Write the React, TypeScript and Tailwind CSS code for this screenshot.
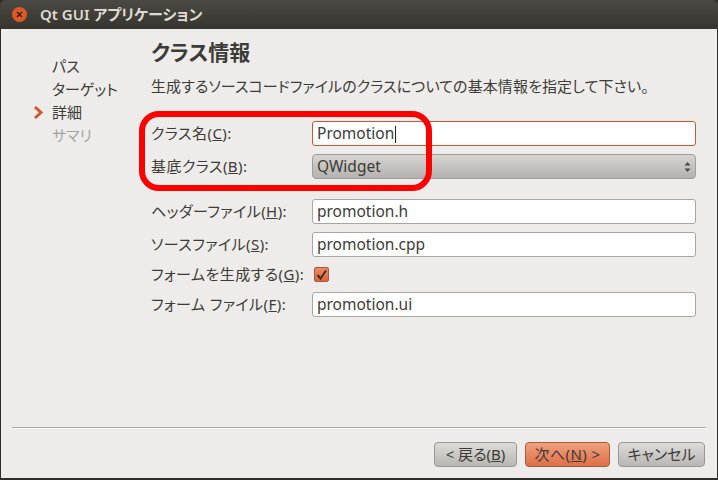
const font = { fontFamily: '"Noto Sans", "Noto Sans CJK JP", sans-serif', fontFeatureSettings: '"palt"' };

function Label({ text, mnemonic }: { text: string; mnemonic: string }) {
  return (
    <label className="w-[161px] shrink-0 text-[15px] leading-none tracking-[0.45px] text-[#3c3b37] whitespace-nowrap">
      {text}(<span className="underline">{mnemonic}</span>):
    </label>
  );
}

function TextInput({ value, focused }: { value: string; focused?: boolean }) {
  return (
    <div
      className={`flex h-[25px] flex-1 items-center rounded-[3px] border bg-white pl-[4px] pt-[1px] text-[15.5px] text-[#3c3b37] ${
        focused ? "border-[#d2562b]" : "border-[#a8a6a2]"
      }`}
    >
      {value}
      {focused && <span className="ml-[1px] h-[17px] w-px bg-[#222]" />}
    </div>
  );
}

function Row({ text, mnemonic, children }: { text: string; mnemonic: string; children: React.ReactNode }) {
  return (
    <div className="flex items-center">
      <Label text={text} mnemonic={mnemonic} />
      {children}
    </div>
  );
}

function Button({ children, primary, width }: { children: React.ReactNode; primary?: boolean; width: string }) {
  return (
    <button
      className={`flex h-[25px] items-center justify-center rounded-[4px] border text-[15px] text-[#3c3b37] ${width} ${
        primary
          ? "border-[#a9593a] bg-gradient-to-b from-[#f0a07c] to-[#de6f47] tracking-[0.4px]"
          : "border-[#999794] bg-gradient-to-b from-[#dcdbd8] to-[#b8b7b3]"
      }`}
    >
      {children}
    </button>
  );
}

export default function App() {
  return (
    <div className="relative flex h-[480px] w-[718px] flex-col overflow-hidden bg-[#2f2e2a]" style={font}>
      {/* Title bar */}
      <div className="flex h-[29px] shrink-0 items-center rounded-t-[6px] bg-gradient-to-b from-[#4a4943] to-[#36352f] pl-[12px]">
        <div className="flex h-[15px] w-[15px] items-center justify-center rounded-full bg-[#dc5a27]">
          <svg width="7" height="7" viewBox="0 0 7 7">
            <path d="M1 1l5 5M6 1l-5 5" stroke="#3a1c0c" strokeWidth="1.4" />
          </svg>
        </div>
        <span className="ml-[13px] text-[15px] font-semibold text-[#dfdbd2]">Qt GUI アプリケーション</span>
      </div>

      {/* Dialog body */}
      <div className="mx-[1px] mb-[2px] flex flex-1 flex-col bg-[#edecea]">
        <div className="flex flex-1">
          {/* Steps */}
          <div className="flex w-[150px] shrink-0 flex-col gap-[4px] pl-[51px] pt-[28px] text-[15px] leading-[19px] text-[#3c3b37]">
            <span>パス</span>
            <span>ターゲット</span>
            <span className="relative">
              <svg className="absolute left-[-19px] top-[2px]" width="12" height="15" viewBox="0 0 12 15">
                <path d="M2 2l6 5.5L2 13" fill="none" stroke="#d2562b" strokeWidth="3" />
              </svg>
              詳細
            </span>
            <span className="text-[#a5a4a1]">サマリ</span>
          </div>

          {/* Page */}
          <div className="flex flex-1 flex-col pr-[21px] pt-[9px]">
            <h1 className="text-[21px] font-bold leading-[28px] text-[#3c3b37]">クラス情報</h1>
            <p className="mt-[10px] text-[15px] leading-[20px] tracking-[0.1px] text-[#3c3b37] whitespace-nowrap">
              生成するソースコードファイルのクラスについての基本情報を指定して下さい。
            </p>
            <div className="mt-[25px] flex flex-col gap-[8px]">
              <Row text="クラス名" mnemonic="C">
                <TextInput value="Promotion" focused />
              </Row>
              <Row text="基底クラス" mnemonic="B">
                <div className="flex h-[25px] flex-1 items-center justify-between rounded-[4px] border border-[#a09e9a] bg-gradient-to-b from-[#d6d5d2] to-[#b3b2ae] px-[4px] pt-[1px] text-[15.5px] text-[#3c3b37]">
                  QWidget
                  <svg width="7" height="14" viewBox="0 0 7 14">
                    <path d="M3.5 2L6.5 5.5H.5zM3.5 12L.5 8.5h6z" fill="#4a4945" />
                  </svg>
                </div>
              </Row>
            </div>
            <div className="mt-[20px] flex flex-col gap-[8px]">
              <Row text="ヘッダーファイル" mnemonic="H">
                <TextInput value="promotion.h" />
              </Row>
              <Row text="ソースファイル" mnemonic="S">
                <TextInput value="promotion.cpp" />
              </Row>
              <Row text="フォームを生成する" mnemonic="G">
                <div className="ml-[2px] flex h-[19px] items-center">
                  <div className="flex h-[15px] w-[15px] items-center justify-center rounded-[2px] border border-[#a9593a] bg-gradient-to-b from-[#ea8a62] to-[#d9683e]">
                    <svg width="13" height="12" viewBox="0 0 13 12">
                      <path d="M2.5 6l3 3.5L11 1.5" fill="none" stroke="#4a2a20" strokeWidth="2" />
                    </svg>
                  </div>
                </div>
              </Row>
              <Row text="フォーム ファイル" mnemonic="F">
                <TextInput value="promotion.ui" />
              </Row>
            </div>
          </div>
        </div>

        {/* Footer */}
        <div className="mx-[11px] border-t border-b border-t-[#a8a6a2] border-b-white" />
        <div className="flex h-[49px] shrink-0 items-start justify-end gap-[8px] pr-[12px] pt-[13px]">
          <Button width="w-[83px]">&lt; 戻る(<span className="underline">B</span>)</Button>
          <Button primary width="w-[85px]">次へ(<span className="underline">N</span>) &gt;</Button>
          <Button width="w-[87px]">キャンセル</Button>
        </div>
      </div>

      {/* Red annotation drawn over the screenshot */}
      <div className="absolute left-[139px] top-[111px] h-[80px] w-[293px] rounded-[20px] border-[6px] border-[#ff0000]" />
    </div>
  );
}
